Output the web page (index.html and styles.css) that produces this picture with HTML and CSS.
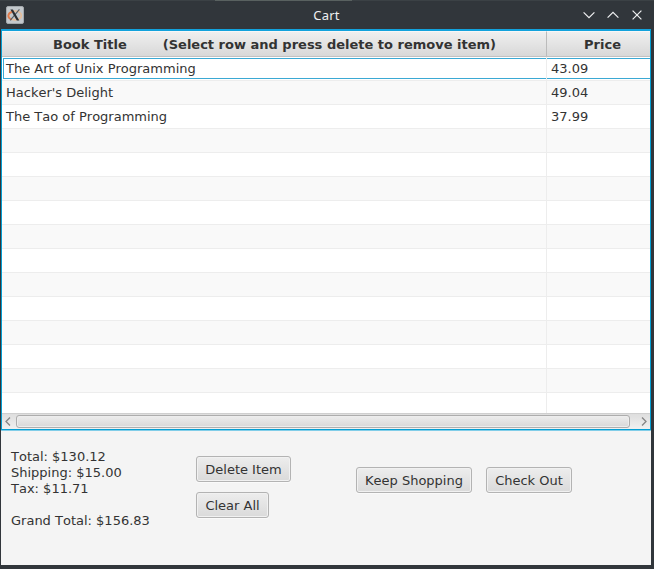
FILE: index.html
```html
<!DOCTYPE html>
<html lang="en">
<head>
<meta charset="utf-8">
<title>Cart</title>
<link rel="stylesheet" href="styles.css">
</head>
<body>
<div class="window">
  <header class="titlebar">
    <svg class="app-icon" width="18" height="18" viewBox="0 0 18 18">
      <rect x="0.5" y="0.5" width="17" height="17" rx="1.5" fill="#c3c8cc" stroke="#a4a9ad"/>
      <ellipse cx="9" cy="9.5" rx="6.4" ry="4.4" fill="none" stroke="#e8bd98" stroke-width="1.5"/>
      <path d="M6 5.8C1.2 7.4 1 12 5.8 13.3" fill="none" stroke="#e07a4c" stroke-width="1.8"/>
      <path d="M13.4 3.4L4.2 14.4" stroke="#555b60" stroke-width="1.1"/>
      <path d="M4.4 3.4h2.5l6.4 11h-2.5z" fill="#2b2f33"/>
    </svg>
    <h1 class="title">Cart</h1>
    <div class="controls">
      <svg width="12" height="12" viewBox="0 0 12 12"><path d="M0.6 3.3L6 8.7l5.4-5.4"/></svg>
      <svg width="12" height="12" viewBox="0 0 12 12"><path d="M0.6 8.7L6 3.3l5.4 5.4"/></svg>
      <svg width="12" height="12" viewBox="0 0 12 12"><path d="M1.6 1.6l8.8 8.8M10.4 1.6l-8.8 8.8"/></svg>
    </div>
  </header>
  <main class="content">
    <section class="table">
      <div class="row head"><div class="cell">Book Title<span class="hint">(Select row and press delete to remove item)</span></div><div class="cell">Price</div></div>
      <div class="rows">
        <div class="row focused"><div class="cell">The Art of Unix Programming</div><div class="cell">43.09</div></div>
        <div class="row"><div class="cell">Hacker's Delight</div><div class="cell">49.04</div></div>
        <div class="row"><div class="cell">The Tao of Programming</div><div class="cell">37.99</div></div>
        <div class="row"><div class="cell"></div><div class="cell"></div></div>
        <div class="row"><div class="cell"></div><div class="cell"></div></div>
        <div class="row"><div class="cell"></div><div class="cell"></div></div>
        <div class="row"><div class="cell"></div><div class="cell"></div></div>
        <div class="row"><div class="cell"></div><div class="cell"></div></div>
        <div class="row"><div class="cell"></div><div class="cell"></div></div>
        <div class="row"><div class="cell"></div><div class="cell"></div></div>
        <div class="row"><div class="cell"></div><div class="cell"></div></div>
        <div class="row"><div class="cell"></div><div class="cell"></div></div>
        <div class="row"><div class="cell"></div><div class="cell"></div></div>
        <div class="row"><div class="cell"></div><div class="cell"></div></div>
        <div class="row"><div class="cell"></div><div class="cell"></div></div>
      </div>
      <div class="scrollbar">
        <svg width="14" height="15" viewBox="0 0 14 15"><path d="M8 3.5l-4 4 4 4"/></svg>
        <div class="thumb"></div>
        <svg width="20" height="15" viewBox="0 0 20 15"><path d="M12 3.5l4 4-4 4"/></svg>
      </div>
    </section>
    <section class="footer">
      <div class="totals">
        <div>Total: $130.12</div>
        <div>Shipping: $15.00</div>
        <div>Tax: $11.71</div>
        <div class="grand">Grand Total: $156.83</div>
      </div>
      <div class="edit">
        <button class="btn delete">Delete Item</button>
        <button class="btn clear">Clear All</button>
      </div>
      <div class="proceed">
        <button class="btn keep">Keep Shopping</button>
        <button class="btn checkout">Check Out</button>
      </div>
    </section>
  </main>
</div>
</body>
</html>
```
FILE: styles.css
```css
* { box-sizing: border-box; }

body {
  margin: 0;
  overflow: hidden;
  font: 13px/16px "DejaVu Sans", sans-serif;
  font-kerning: none;
  color: #333;
}

.window {
  width: 654px;
  height: 569px;
  background: #31363b;
  display: flex;
  flex-direction: column;
}

.titlebar {
  height: 29px;
  flex: none;
  display: grid;
  grid-template-columns: 100px 1fr 100px;
  align-items: center;
  padding: 1px 11px 0 6px;
  background: linear-gradient(90deg, #3b4145 215px, #596160 215px, #596160 352px, #3b4145 352px) top / 100% 1px no-repeat;
}

.app-icon { display: block; }

.title {
  margin: 0;
  font: 13px/18px "Noto Sans", sans-serif;
  font-kerning: none;
  letter-spacing: 0.2px;
  color: #eff0f1;
  text-align: center;
  padding-left: 4px;
}

.controls {
  display: flex;
  justify-content: flex-end;
  gap: 12px;
}

.controls svg {
  fill: none;
  stroke: #eff0f1;
  stroke-width: 1.2;
}

.content {
  width: 650px;
  height: 536px;
  margin-left: 1px;
  background: #f4f4f4;
}

.table {
  height: 401px;
  border: 1px solid #039ed3;
  border-top: 2px solid #12a2dc;
  box-shadow: 0 1px 0 #81cde8;
  display: flex;
  flex-direction: column;
}

.row {
  display: grid;
  grid-template-columns: 545px 1fr;
  height: 24px;
  background: #fff;
  border-bottom: 1px solid #ededed;
}

.row:nth-child(even) { background: #f9f9f9; }

.cell {
  padding: 4px 4px 0;
  white-space: pre;
}

.cell:first-child { border-right: 1px solid #ededed; }

.row.focused .cell {
  position: relative;
}

.row.focused .cell::after {
  content: "";
  position: absolute;
  inset: 1px 0 1px 0;
  border: solid #3ba9d4;
  border-width: 1px 0;
}

.row.focused .cell:first-child::after {
  left: 1px;
  border-left-width: 1px;
}

.row.head {
  height: 26px;
  flex: none;
  font-weight: bold;
  background: linear-gradient(#f0f0f0, #d8d8d8);
  border-bottom: 1px solid #c1c1c1;
}

.head .cell {
  padding: 5px 0 0;
  text-align: center;
  border-top: 1px solid #f7f7f7;
}

.head .cell:first-child {
  padding-left: 1px;
  border-right-color: #bbb;
}

.head .cell:last-child {
  padding-left: 8px;
}

.hint { margin-left: 36px; }

.rows {
  flex: 1;
  min-height: 0;
  overflow: hidden;
}

.scrollbar {
  flex: none;
  height: 16px;
  display: flex;
  background: linear-gradient(#dedede, #f0f0f0);
  border-top: 1px solid #cfcfcf;
}

.scrollbar svg {
  flex: none;
  fill: none;
  stroke: #858585;
  stroke-width: 1.3;
}

.thumb {
  flex: 1;
  height: 13px;
  margin-top: 1px;
  border: 1px solid #adadad;
  border-radius: 3px;
  background: linear-gradient(#ededed, #d8d8d8);
  box-shadow: inset 0 0 0 1px #ededed;
}

.footer {
  display: grid;
  grid-template-columns: 185px 160px 1fr;
  padding: 1px 0 0 10px;
}

.totals { padding-top: 18px; }

.grand { margin-top: 16px; }

.edit {
  padding-top: 25px;
  display: flex;
  flex-direction: column;
  gap: 10px;
}

.proceed {
  padding-top: 36px;
  display: flex;
  gap: 14px;
}

.btn {
  height: 26px;
  padding: 2px 0 0;
  font: 13px/16px "DejaVu Sans", sans-serif;
  font-kerning: none;
  color: #333;
  border: 1px solid #b3b3b3;
  border-radius: 3px;
  background: linear-gradient(#ededed, #dadada);
  box-shadow: inset 0 0 0 1px #f1f1f1, 0 1px 0 #fafafa;
}

.delete { width: 95px; }
.clear { width: 73px; }
.keep { width: 116px; }
.checkout { width: 86px; }
```
